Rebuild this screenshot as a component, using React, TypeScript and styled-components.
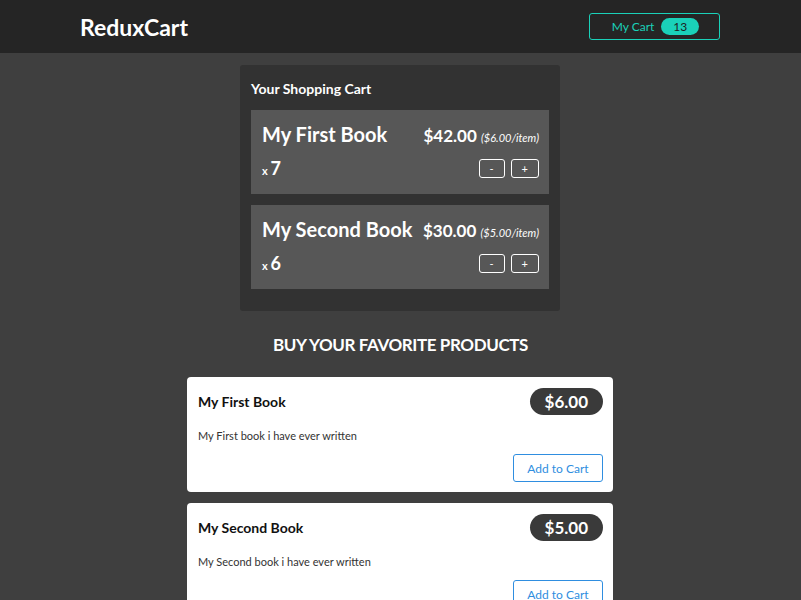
import React from 'react';
import styled, { createGlobalStyle } from 'styled-components';

interface CartItem {
  title: string
  quantity: number
  price: number
}

interface Product {
  title: string
  price: number
  description: string
}

const cartItems: CartItem[] = [
  { title: 'My First Book', quantity: 7, price: 6 },
  { title: 'My Second Book', quantity: 6, price: 5 },
]

const products: Product[] = [
  { title: 'My First Book', price: 6, description: 'My First book i have ever written' },
  { title: 'My Second Book', price: 5, description: 'My Second book i have ever written' },
]

/* ===========
App
=========== */
export default function App() {
  const totalQuantity = cartItems.reduce((sum, item) => sum + item.quantity, 0)

  return (
    <>
      <GlobalStyle />
      <Header>
        <Logo>ReduxCart</Logo>
        <CartButton>
          <span>My Cart</span>
          <Badge>{totalQuantity}</Badge>
        </CartButton>
      </Header>
      <Main>
        <CartPanel>
          <CartTitle>Your Shopping Cart</CartTitle>
          <CartList>
            {cartItems.map(item => (
              <CartRow key={item.title}>
                <RowTop>
                  <ItemTitle>{item.title}</ItemTitle>
                  <ItemPrice>
                    ${(item.price * item.quantity).toFixed(2)}{' '}
                    <PerItem>(${item.price.toFixed(2)}/item)</PerItem>
                  </ItemPrice>
                </RowTop>
                <RowBottom>
                  <Quantity>
                    x <span>{item.quantity}</span>
                  </Quantity>
                  <Actions>
                    <QtyButton>-</QtyButton>
                    <QtyButton>+</QtyButton>
                  </Actions>
                </RowBottom>
              </CartRow>
            ))}
          </CartList>
        </CartPanel>

        <ProductsSection>
          <SectionTitle>BUY YOUR FAVORITE PRODUCTS</SectionTitle>
          <ProductList>
            {products.map(product => (
              <ProductCard key={product.title}>
                <ProductHeader>
                  <ProductTitle>{product.title}</ProductTitle>
                  <PricePill>${product.price.toFixed(2)}</PricePill>
                </ProductHeader>
                <ProductText>{product.description}</ProductText>
                <ProductActions>
                  <AddButton>Add to Cart</AddButton>
                </ProductActions>
              </ProductCard>
            ))}
          </ProductList>
        </ProductsSection>
      </Main>
    </>
  )
}

/* style */
const GlobalStyle = createGlobalStyle`
  * { box-sizing: border-box; }
  body {
    margin: 0;
    background: #3f3f3f;
    font-family: Lato, "Noto Sans", sans-serif;
    color: #fff;
  }
`

const Header = styled.header`
  height: 53px;
  background: #252525;
  display: flex;
  align-items: center;
  justify-content: space-between;
  padding: 0 81px 0 80px;
`

const Logo = styled.h1`
  margin: 0;
  font-size: 23px;
  font-weight: 700;
  color: #fff;
`

const CartButton = styled.button`
  width: 131px;
  height: 27px;
  display: flex;
  align-items: center;
  justify-content: center;
  gap: 7px;
  background: transparent;
  border: 1px solid #1ad1b9;
  border-radius: 3px;
  color: #1ad1b9;
  font-family: inherit;
  font-size: 12px;
  padding: 0 0 0 2px;
`

const Badge = styled.span`
  display: inline-flex;
  align-items: center;
  justify-content: center;
  width: 38px;
  height: 17px;
  border-radius: 9px;
  background: #1ad1b9;
  color: #1e1e1e;
  font-size: 12px;
`

const Main = styled.main`
  display: flex;
  flex-direction: column;
  align-items: center;
  padding-top: 12px;
`

const CartPanel = styled.section`
  width: 320px;
  margin-right: 1px;
  background: #323232;
  border-radius: 3px;
  padding: 14px 11px 22px;
`

const CartTitle = styled.h2`
  margin: 0 0 11px;
  font-size: 14px;
  font-weight: 700;
  line-height: 20px;
`

const CartList = styled.div`
  display: flex;
  flex-direction: column;
  gap: 11px;
`

const CartRow = styled.div`
  background: #575757;
  height: 84px;
  padding: 11px 10px 0 11px;
`

const RowTop = styled.div`
  display: flex;
  justify-content: space-between;
  align-items: baseline;
`

const ItemTitle = styled.h3`
  margin: 0;
  font-size: 20px;
  font-weight: 700;
  line-height: 26px;
`

const ItemPrice = styled.div`
  font-size: 17px;
  font-weight: 700;
`

const PerItem = styled.span`
  font-size: 11px;
  font-style: italic;
  font-weight: 400;
`

const RowBottom = styled.div`
  display: flex;
  justify-content: space-between;
  align-items: center;
  margin-top: 10px;
`

const Quantity = styled.div`
  font-size: 11px;
  font-weight: 700;

  span {
    font-size: 18px;
  }
`

const Actions = styled.div`
  display: flex;
  gap: 6px;
`

const QtyButton = styled.button`
  height: 19px;
  min-width: 26px;
  padding: 0 10px;
  background: transparent;
  border: 1px solid #fff;
  border-radius: 3px;
  color: #fff;
  font-family: inherit;
  font-size: 11px;
  line-height: 1;
`

const ProductsSection = styled.section`
  display: flex;
  flex-direction: column;
  align-items: center;
  padding-top: 23px;
`

const SectionTitle = styled.h2`
  margin: 0 0 21px;
  font-size: 17px;
  font-weight: 700;
  line-height: 22px;
  letter-spacing: -0.4px;
`

const ProductList = styled.div`
  display: flex;
  flex-direction: column;
  gap: 11px;
`

const ProductCard = styled.div`
  width: 426px;
  margin-right: 1px;
  height: 115px;
  background: #fff;
  border-radius: 4px;
  padding: 11px 10px 10px 11px;
  color: #111;
`

const ProductHeader = styled.div`
  display: flex;
  justify-content: space-between;
  align-items: center;
`

const ProductTitle = styled.h3`
  margin: 0;
  font-size: 14px;
  font-weight: 700;
`

const PricePill = styled.span`
  height: 27px;
  padding: 0 15px;
  border-radius: 14px;
  background: #3a3a3a;
  color: #fff;
  font-size: 17px;
  font-weight: 700;
  display: inline-flex;
  align-items: center;
`

const ProductText = styled.p`
  margin: 14px 0 12px;
  font-size: 11px;
  color: #333;
`

const ProductActions = styled.div`
  display: flex;
  justify-content: flex-end;
`

const AddButton = styled.button`
  height: 28px;
  width: 90px;
  background: #fff;
  border: 1px solid #2f8ee0;
  border-radius: 3px;
  color: #2f8ee0;
  font-family: inherit;
  font-size: 12px;
`
